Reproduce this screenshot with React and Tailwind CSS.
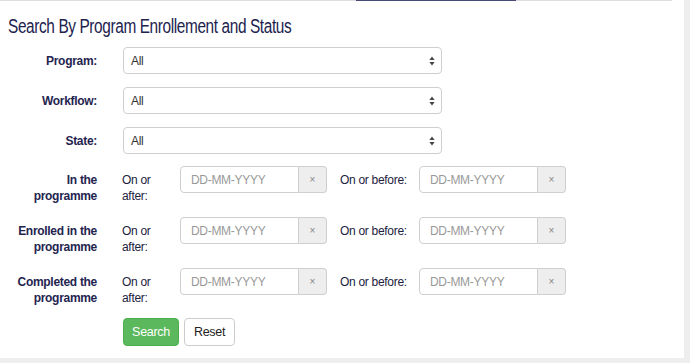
import React from 'react';

const SelectRow = ({ label }) => (
  <div className="flex items-center h-[27px]">
    <label className="w-[97px] text-right font-bold text-[12px] tracking-[-0.3px] text-[#24244f]">
      {label}
    </label>
    <div className="ml-[26px] w-[319px] h-[27px] flex items-center justify-between border border-[#cfcfcf] rounded-[4px] bg-white pl-[7px] pr-[6px]">
      <span className="text-[12px] tracking-[-0.3px] text-[#333]">All</span>
      <svg width="6" height="10" viewBox="0 0 6 10" className="text-[#444]">
        <path d="M3 0.5 L5.6 4 L0.4 4 Z" fill="currentColor" />
        <path d="M3 9.5 L5.6 6 L0.4 6 Z" fill="currentColor" />
      </svg>
    </div>
  </div>
);

const DateInput = () => (
  <div className="flex w-[147px] h-[27px]">
    <div className="flex-1 flex items-center border border-[#cfcfcf] rounded-l-[4px] bg-white pl-[10px]">
      <span className="text-[12px] tracking-[-0.3px] text-[#999]">DD-MM-YYYY</span>
    </div>
    <div className="w-[28px] flex items-center justify-center border border-l-0 border-[#cfcfcf] rounded-r-[4px] bg-[#eee] text-[10px] text-[#888]">
      ×
    </div>
  </div>
);

const DateRow = ({ first, second }) => (
  <div className="flex items-start h-[38px]">
    <div className="w-[97px] pt-[6px] text-right font-bold text-[12px] leading-4 tracking-[-0.3px] text-[#24244f]">
      <div>{first}</div>
      <div>{second}</div>
    </div>
    <div className="ml-[25px] w-[58px] pt-[6px] text-[12px] leading-4 tracking-[-0.3px] text-[#222240]">
      <div>On or</div>
      <div>after:</div>
    </div>
    <DateInput />
    <div className="ml-[13px] w-[79px] h-[27px] flex items-center text-[12px] tracking-[-0.3px] text-[#222240]">
      On or before:
    </div>
    <DateInput />
  </div>
);

export default function App() {
  return (
    <div className="w-[690px] h-[363px] bg-[#eee] overflow-hidden" style={{ fontFamily: '"Liberation Sans", Arial, sans-serif' }}>
      <div className="w-[684px] h-[358px] bg-white">
        <div className="flex w-[672px] h-[1px]">
          <div className="w-[356px] bg-[#ddd]" />
          <div className="w-[160px] bg-[#4a4a78]" />
          <div className="flex-1 bg-[#ddd]" />
        </div>
        <h1 className="mt-[11px] ml-[8px] w-max origin-left scale-x-[0.77] text-[20px] leading-[28px] tracking-[-0.5px] text-[#22224e]">
          Search By Program Enrollement and Status
        </h1>
        <div className="mt-[7px] flex flex-col gap-[13px]">
          <SelectRow label="Program:" />
          <SelectRow label="Workflow:" />
          <SelectRow label="State:" />
          <div className="mt-[-1px] flex flex-col gap-[13px]">
            <DateRow first="In the" second="programme" />
            <DateRow first="Enrolled in the" second="programme" />
            <DateRow first="Completed the" second="programme" />
          </div>
          <div className="mt-[-1px] ml-[123px] flex gap-[5px]">
            <button className="w-[56px] h-[28px] rounded-[4px] bg-[#5cb85c] border border-[#4cae4c] text-white text-[12.5px] tracking-[-0.3px]">
              Search
            </button>
            <button className="w-[51px] h-[28px] rounded-[4px] bg-white border border-[#ccc] text-[#222] text-[12.5px] tracking-[-0.3px]">
              Reset
            </button>
          </div>
        </div>
      </div>
    </div>
  );
}
